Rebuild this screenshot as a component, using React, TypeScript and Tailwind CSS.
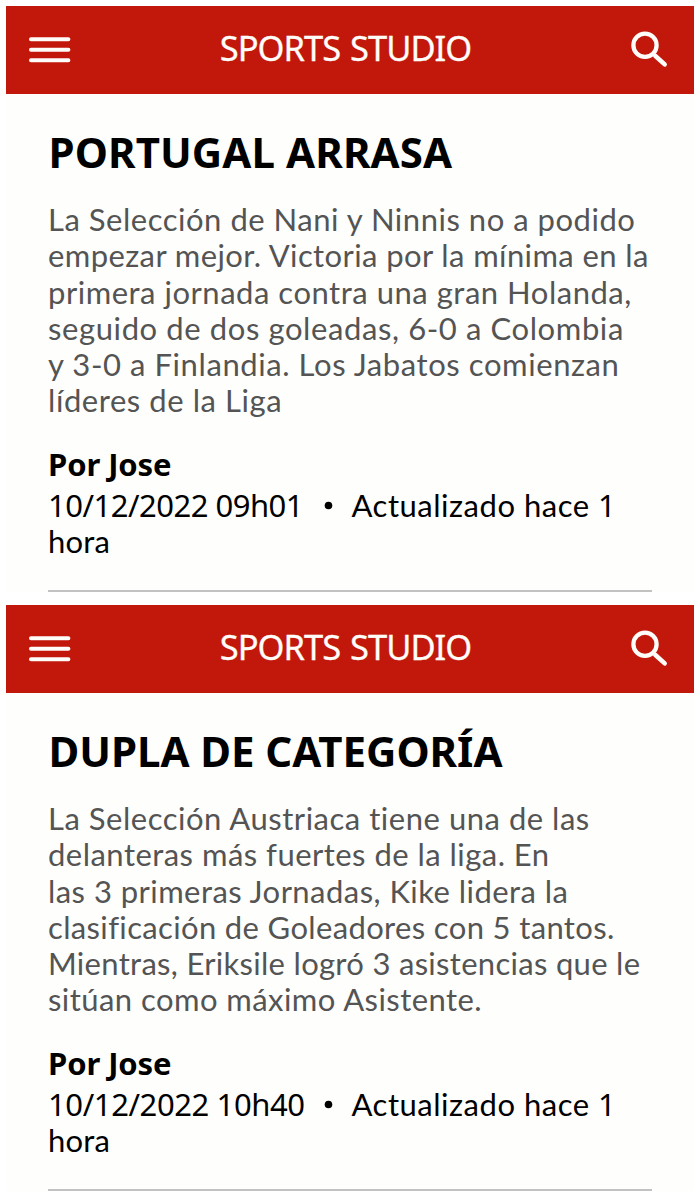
type Line = { text: string; tracking: string };

type Article = {
  title: string;
  titleTracking: string;
  lines: Line[];
  author: string;
  date: string;
  dateTracking: string;
};

const articles: Article[] = [
  {
    title: "PORTUGAL ARRASA",
    titleTracking: "tracking-[0.1px]",
    lines: [
      { text: "La Selección de Nani y Ninnis no a podido", tracking: "tracking-[0.52px]" },
      { text: "empezar mejor. Victoria por la mínima en la", tracking: "tracking-[0.4px]" },
      { text: "primera jornada contra una gran Holanda,", tracking: "tracking-[0.52px]" },
      { text: "seguido de dos goleadas, 6-0 a Colombia", tracking: "tracking-[0.6px]" },
      { text: "y 3-0 a Finlandia. Los Jabatos comienzan", tracking: "tracking-[0.58px]" },
      { text: "líderes de la Liga", tracking: "tracking-[0.56px]" },
    ],
    author: "Por Jose",
    date: "10/12/2022 09h01",
    dateTracking: "tracking-[-0.5px]",
  },
  {
    title: "DUPLA DE CATEGORÍA",
    titleTracking: "tracking-[-0.04px]",
    lines: [
      { text: "La Selección Austriaca tiene una de las", tracking: "tracking-[0.52px]" },
      { text: "delanteras más fuertes de la liga. En", tracking: "tracking-[0.47px]" },
      { text: "las 3 primeras Jornadas, Kike lidera la", tracking: "tracking-[0.45px]" },
      { text: "clasificación de Goleadores con 5 tantos.", tracking: "tracking-[0.35px]" },
      { text: "Mientras, Eriksile logró 3 asistencias que le", tracking: "tracking-[0.3px]" },
      { text: "sitúan como máximo Asistente.", tracking: "tracking-[0.44px]" },
    ],
    author: "Por Jose",
    date: "10/12/2022 10h40",
    dateTracking: "tracking-[-0.4px]",
  },
];

function Header() {
  return (
    <header className="flex h-[88px] items-center justify-between bg-[#c2170b] pr-[26px] pl-[22px] text-[#fffdfa]">
      <button aria-label="Menú" className="flex">
        <svg width="44" height="28" viewBox="0 0 44 28" stroke="currentColor" strokeWidth="4" strokeLinecap="round">
          <path d="M3 3.3H40.4M3 13.8H40.4M3 24.3H40.4" />
        </svg>
      </button>
      <span className="mr-[12px] pb-[4px] font-['Noto_Sans',sans-serif] text-[34.5px] leading-[48px] tracking-[-1px] whitespace-nowrap [word-spacing:2px] [-webkit-text-stroke:0.3px_currentColor]">
        SPORTS STUDIO
      </span>
      <button aria-label="Buscar" className="flex pb-[2px]">
        <svg width="37" height="37" viewBox="0 0 37 37" fill="none" stroke="currentColor">
          <circle cx="14" cy="14.3" r="11.6" strokeWidth="4.3" />
          <path d="M24.4 25L33.7 33.4" strokeWidth="4.5" strokeLinecap="round" />
        </svg>
      </button>
    </header>
  );
}

function Story({ article }: { article: Article }) {
  return (
    <section className="h-[599px]">
      <Header />
      <article className="bg-[#fefefc] pt-[33px] pl-[42px] whitespace-nowrap text-black">
        <h1 className={`pl-[0.5px] font-['Noto_Sans',sans-serif] text-[42px] leading-[50px] font-bold ${article.titleTracking}`}>
          {article.title}
        </h1>
        <div className="mt-6 font-['Lato',sans-serif] text-[31px] leading-[36.3px] text-[#545454]">
          {article.lines.map((line) => (
            <p key={line.text} className={line.tracking}>
              {line.text}
            </p>
          ))}
        </div>
        <p className="mt-6 font-['Noto_Sans',sans-serif] text-[31px] leading-[42px] font-bold tracking-[-0.1px]">
          {article.author}
        </p>
        <div className="mt-[2px] flex h-[36px] items-baseline font-['Lato',sans-serif] text-[31px] leading-[36px]">
          <span className={`w-[274.5px] font-['Noto_Sans',sans-serif] ${article.dateTracking}`}>{article.date}</span>
          <svg width="29" height="20" viewBox="0 0 29 20">
            <circle cx="5.5" cy="8.5" r="3.8" />
          </svg>
          <span className="w-[246.5px] tracking-[0.52px]">Actualizado hace</span>
          <span className="font-['Noto_Sans',sans-serif]">1</span>
        </div>
        <p className="font-['Lato',sans-serif] text-[31px] leading-[37px] tracking-[0.2px]">hora</p>
        <div className="mt-[30px] h-[2px] w-[604px] bg-[#c2c2c2]" />
      </article>
    </section>
  );
}

export default function App() {
  return (
    <main className="h-[1200px] w-[700px] overflow-hidden bg-white px-[6px] pt-[6px]">
      {articles.map((article) => (
        <Story key={article.title} article={article} />
      ))}
    </main>
  );
}
